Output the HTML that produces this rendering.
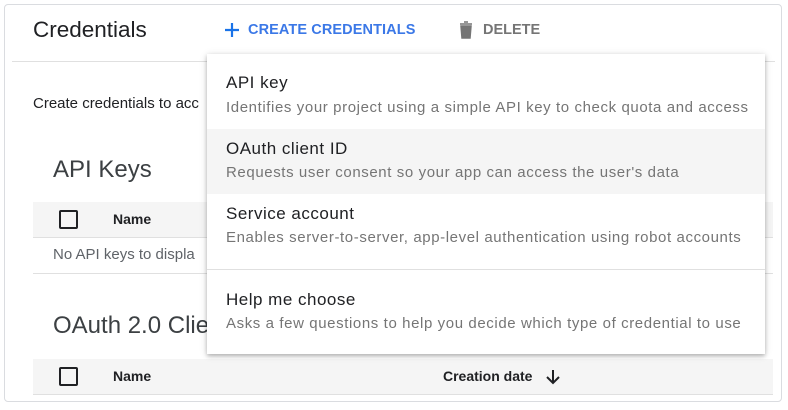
<!DOCTYPE html>
<html><head><style>
body{margin:0;width:788px;height:410px;background:#fff;font-family:"Liberation Sans",sans-serif;position:relative;overflow:hidden}
.card{position:absolute;left:4px;top:4px;width:778px;height:398px;border:1px solid #dadce0;border-radius:4px;box-sizing:border-box}
.a{position:absolute;white-space:nowrap}
.gray{position:absolute;left:33px;width:740px;background:#f5f5f5;border-bottom:1px solid #e0e0e0}
.cb{position:absolute;width:15px;height:15px;border:2px solid #202124;border-radius:2px;left:59px}
.menu{position:absolute;left:207px;top:54px;width:558px;height:300px;background:#fff;box-shadow:0 2px 4px rgba(0,0,0,.25),0 1px 8px rgba(0,0,0,.12)}
.t{position:absolute;left:19px;font-size:17px;color:#202124;letter-spacing:0.5px}
.s{position:absolute;left:19px;font-size:15px;color:#757575;letter-spacing:0.6px}
</style></head><body>
<div class="card"></div>
<div class="a" style="left:33px;top:17px;font-size:22.5px;color:#202124">Credentials</div>
<svg class="a" style="left:224px;top:22px" width="16" height="16"><path d="M8 1v14M1 8h14" stroke="#1a73e8" stroke-width="2.2"/></svg>
<div class="a" style="left:248px;top:22px;font-size:14.5px;font-weight:bold;color:#3b78e7;letter-spacing:.1px">CREATE CREDENTIALS</div>
<svg class="a" style="left:459px;top:21px" width="14" height="18"><path d="M1 3h12M5 1h4M2 5h10l-1 12H3z" fill="#757575" stroke="#757575" stroke-width="1.5"/></svg>
<div class="a" style="left:483px;top:22px;font-size:14.5px;font-weight:bold;color:#757575">DELETE</div>
<div class="a" style="left:12px;top:61px;width:763px;height:1px;background:#e0e0e0"></div>
<div class="a" style="left:33px;top:95px;font-size:15px;color:#202124">Create credentials to acc</div>
<div class="a" style="left:53px;top:156px;font-size:24px;color:#3c4043">API Keys</div>
<div class="gray" style="top:202px;height:35px"></div>
<div class="cb" style="top:210px"></div>
<div class="a" style="left:113px;top:211px;font-size:14px;font-weight:bold;color:#202124">Name</div>
<div class="a" style="left:53px;top:246px;font-size:15px;color:#5f6368">No API keys to displa</div>
<div class="a" style="left:33px;top:273px;width:740px;height:1px;background:#e0e0e0"></div>
<div class="a" style="left:53px;top:312px;font-size:24px;color:#3c4043">OAuth 2.0 Clie</div>
<div class="gray" style="top:359px;height:35px"></div>
<div class="cb" style="top:367px"></div>
<div class="a" style="left:113px;top:368px;font-size:14px;font-weight:bold;color:#202124">Name</div>
<div class="a" style="left:443px;top:368px;font-size:14px;font-weight:bold;color:#202124">Creation date</div>
<svg class="a" style="left:545px;top:368px" width="16" height="18"><path d="M8 2v13M2 9l6 6 6-6" stroke="#202124" stroke-width="2" fill="none"/></svg>
<div class="menu">
<div class="t" style="top:19px">API key</div>
<div class="s" style="top:45px">Identifies your project using a simple API key to check quota and access</div>
<div class="a" style="left:0;top:75px;width:558px;height:65px;background:#f5f5f5"></div>
<div class="t" style="top:85px">OAuth client ID</div>
<div class="s" style="top:110px">Requests user consent so your app can access the user's data</div>
<div class="t" style="top:150px">Service account</div>
<div class="s" style="top:175px">Enables server-to-server, app-level authentication using robot accounts</div>
<div class="a" style="left:0;top:215px;width:558px;height:1px;background:#e0e0e0"></div>
<div class="t" style="top:236px">Help me choose</div>
<div class="s" style="top:261px">Asks a few questions to help you decide which type of credential to use</div>
</div>
</body></html>
